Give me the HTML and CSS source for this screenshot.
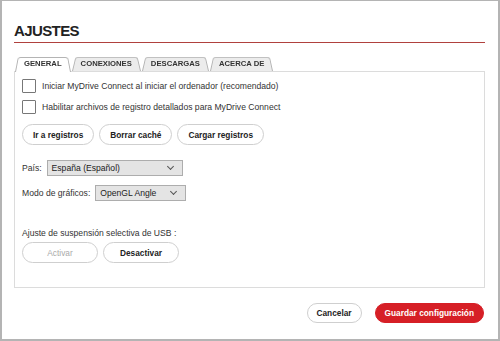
FILE: index.html
```html
<!DOCTYPE html>
<html lang="es">
<head>
    <meta charset="UTF-8">
    <title>Ajustes</title>
    <link rel="stylesheet" href="styles.css">
</head>
<body>
    <div class="window">
        <h1 class="title">AJUSTES</h1>

        <div class="tabs">
            <div class="tab active">GENERAL</div>
            <div class="tab">CONEXIONES</div>
            <div class="tab">DESCARGAS</div>
            <div class="tab">ACERCA DE</div>
        </div>

        <div class="panel">
            <label class="check"><span class="box"></span>Iniciar MyDrive Connect al iniciar el ordenador (recomendado)</label>
            <label class="check"><span class="box"></span>Habilitar archivos de registro detallados para MyDrive Connect</label>

            <div class="btn-row">
                <button class="pill">Ir a registros</button>
                <button class="pill">Borrar caché</button>
                <button class="pill">Cargar registros</button>
            </div>

            <div class="field">
                <span>País:</span>
                <div class="select country">España (Español)<span class="chev"></span></div>
            </div>
            <div class="field">
                <span>Modo de gráficos:</span>
                <div class="select graphics">OpenGL Angle<span class="chev"></span></div>
            </div>

            <div class="usb">
                <div class="usb-label">Ajuste de suspensión selectiva de USB :</div>
                <div class="btn-row tight">
                    <button class="pill wide" disabled>Activar</button>
                    <button class="pill wide">Desactivar</button>
                </div>
            </div>
        </div>

        <div class="footer">
            <button class="pill">Cancelar</button>
            <button class="pill primary">Guardar configuración</button>
        </div>
    </div>
</body>
</html>
```

FILE: styles.css
```css
html, body {
    margin: 0;
    padding: 0;
    background: #fff;
    font-family: "Liberation Sans", Arial, sans-serif;
    color: #333;
}
.window {
    width: 500px;
    height: 341px;
    box-sizing: border-box;
    border: 2px solid #b4b4b4;
    border-top-width: 1px;
    padding: 0 13px 0 12px;
    display: flex;
    flex-direction: column;
}
.title {
    margin: 21px 0 0;
    padding: 0 0 3px;
    font-size: 15px;
    font-weight: bold;
    letter-spacing: -0.6px;
    color: #222;
    border-bottom: 1px solid #b0413e;
}
.tabs {
    display: flex;
    margin-top: 12px;
    padding-left: 1px;
    height: 16px;
    position: relative;
    z-index: 2;
}
.tab {
    position: relative;
    z-index: 0;
    height: 16px;
    line-height: 17px;
    font-size: 7.7px;
    font-weight: bold;
    color: #333;
    padding: 0 9px;
    margin-right: 1px;
    text-align: center;
}
.tab::before {
    content: '';
    position: absolute;
    top: 0;
    left: 0;
    right: 0;
    bottom: 0;
    z-index: -1;
    background: #ececec;
    border: 1px solid #b4b4b4;
    border-bottom: none;
    border-radius: 3px 3px 0 0;
    transform: perspective(30px) rotateX(12deg);
    transform-origin: bottom;
}
.tab.active {
    z-index: 2;
    height: 17px;
}
.tab.active::before {
    background: #fff;
}
.panel {
    position: relative;
    z-index: 1;
    height: 217px;
    box-sizing: border-box;
    border: 1px solid #dcdcdc;
    padding: 7px 7px 0;
    font-size: 8.6px;
    color: #333;
}
.check {
    display: flex;
    align-items: center;
    height: 14px;
    margin-bottom: 7px;
}
.box {
    width: 12px;
    height: 12px;
    border: 1px solid #777;
    border-radius: 1px;
    margin-right: 6px;
    background: #fff;
}
.btn-row {
    display: flex;
    gap: 5px;
    margin-top: 10px;
}
.pill {
    font-family: "Liberation Sans", Arial, sans-serif;
    font-size: 8.3px;
    font-weight: bold;
    color: #222;
    background: #fff;
    border: 1px solid #cfcfcf;
    border-radius: 11px;
    height: 21px;
    padding: 0 10px;
    cursor: pointer;
}
.pill:disabled {
    color: #aaa;
    font-weight: normal;
}
.pill.wide {
    width: 76px;
}
.field {
    display: flex;
    align-items: center;
    gap: 5px;
    margin-top: 15px;
}
.field + .field {
    margin-top: 9px;
}
.select {
    position: relative;
    height: 16px;
    box-sizing: border-box;
    line-height: 15px;
    padding-left: 4px;
    background: #e4e4e4;
    border: 1px solid #adadad;
    color: #222;
}
.select.country {
    width: 136px;
}
.select.graphics {
    width: 91px;
}
.chev {
    position: absolute;
    right: 9px;
    top: 3px;
    width: 4px;
    height: 4px;
    border-right: 1px solid #555;
    border-bottom: 1px solid #555;
    transform: rotate(45deg);
}
.usb {
    margin-top: 27px;
}
.usb-label {
    margin-bottom: 4px;
}
.btn-row.tight {
    margin-top: 0;
}
.footer {
    display: flex;
    justify-content: flex-end;
    gap: 13px;
    margin-top: 15px;
    margin-right: 1px;
}
.footer .pill {
    height: 20px;
    padding: 0 9px;
}
.pill.primary {
    background: #d61f26;
    border-color: #d61f26;
    color: #fff;
}
```
